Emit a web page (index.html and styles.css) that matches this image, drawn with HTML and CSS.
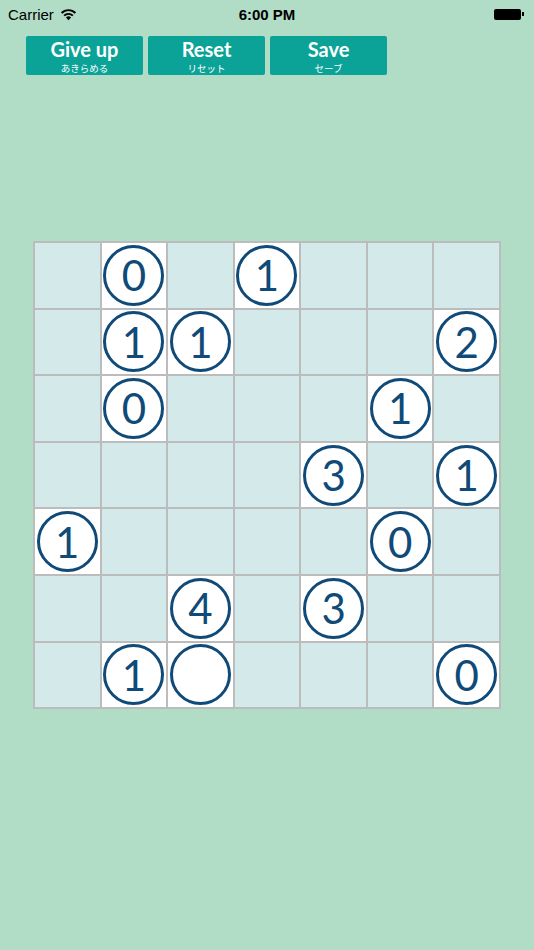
FILE: index.html
```html
<!DOCTYPE html>
<html lang="en">
<head>
    <meta charset="UTF-8">
    <meta name="viewport" content="width=device-width, initial-scale=1.0">
    <title>Circle Puzzle</title>
    <link rel="stylesheet" href="styles.css">
</head>
<body>
    <div class="status-bar">
        <div class="carrier">Carrier
            <svg class="wifi" width="17" height="13" viewBox="0 0 16 12">
                <path d="M8 11.5 L5.6 8.9 A3.4 3.4 0 0 1 10.4 8.9 Z" fill="#000"/>
                <path d="M3.9 7.1 A5.8 5.8 0 0 1 12.1 7.1" stroke="#000" stroke-width="1.8" fill="none"/>
                <path d="M1.5 4.6 A9.2 9.2 0 0 1 14.5 4.6" stroke="#000" stroke-width="1.8" fill="none"/>
            </svg>
        </div>
        <div class="clock">6:00 PM</div>
        <div class="battery"><span class="battery-body"></span><span class="battery-tip"></span></div>
    </div>

    <div class="toolbar">
        <button class="btn"><span class="btn-main">Give up</span><span class="btn-sub">あきらめる</span></button>
        <button class="btn"><span class="btn-main">Reset</span><span class="btn-sub">リセット</span></button>
        <button class="btn"><span class="btn-main">Save</span><span class="btn-sub">セーブ</span></button>
    </div>

    <div class="board" id="board"></div>

    <script>
        // puzzle layout: "." empty cell, "o" circle without number, digits are circles with numbers
        const rows = [
            ".0.1...",
            ".11...2",
            ".0...1.",
            "....3.1",
            "1....0.",
            "..4.3..",
            ".1o...0"
        ];

        const board = document.getElementById("board");
        rows.forEach(row => {
            for (const ch of row) {
                const cell = document.createElement("div");
                cell.className = "cell";
                if (ch !== ".") {
                    cell.classList.add("filled");
                    const circle = document.createElement("div");
                    circle.className = "circle";
                    if (ch !== "o") circle.innerText = ch;
                    cell.appendChild(circle);
                }
                board.appendChild(cell);
            }
        });
    </script>
</body>
</html>
```

FILE: styles.css
```css
body {
    margin: 0;
    padding: 0;
    width: 534px;
    height: 950px;
    background: #b1dcc6;
    font-family: "Liberation Sans", Arial, sans-serif;
}
.status-bar {
    height: 28px;
    display: flex;
    align-items: center;
    justify-content: space-between;
    padding: 0 10px 0 8px;
    font-size: 15px;
    color: #000;
    position: relative;
}
.carrier {
    display: flex;
    align-items: center;
    gap: 6px;
}
.clock {
    position: absolute;
    left: 0;
    right: 0;
    text-align: center;
    font-weight: bold;
    font-size: 15px;
}
.battery {
    display: flex;
    align-items: center;
}
.battery-body {
    width: 27px;
    height: 11px;
    background: #000;
    border-radius: 2px;
}
.battery-tip {
    width: 2px;
    height: 4px;
    background: #000;
    margin-left: 1px;
}
.toolbar {
    display: flex;
    gap: 5px;
    padding: 8px 0 0 26px;
}
.btn {
    width: 117px;
    height: 39px;
    border: none;
    border-radius: 2px;
    background: #0ba398;
    color: #fff;
    display: flex;
    flex-direction: column;
    align-items: center;
    justify-content: center;
    padding: 0;
    font-family: "Lato", "Noto Sans CJK JP", sans-serif;
}
.btn-main {
    font-size: 20px;
    font-weight: bold;
    line-height: 24px;
}
.btn-sub {
    font-size: 9.5px;
    line-height: 14px;
    font-family: "Noto Sans CJK JP", sans-serif;
}
.board {
    margin: 166px 0 0 33px;
    width: 468px;
    display: grid;
    grid-template-columns: repeat(7, 1fr);
    gap: 2px;
    padding: 2px;
    box-sizing: border-box;
    background: #bcbcbc;
}
.cell {
    height: 64.6px;
    background: #d4eaea;
    display: flex;
    align-items: center;
    justify-content: center;
}
.cell.filled {
    background: #fff;
}
.circle {
    width: 55px;
    height: 55px;
    border: 3px solid #0f4a78;
    border-radius: 50%;
    display: flex;
    align-items: center;
    justify-content: center;
    color: #0f4a78;
    font-family: "Lato", sans-serif;
    font-size: 42px;
    line-height: 1;
}
```
